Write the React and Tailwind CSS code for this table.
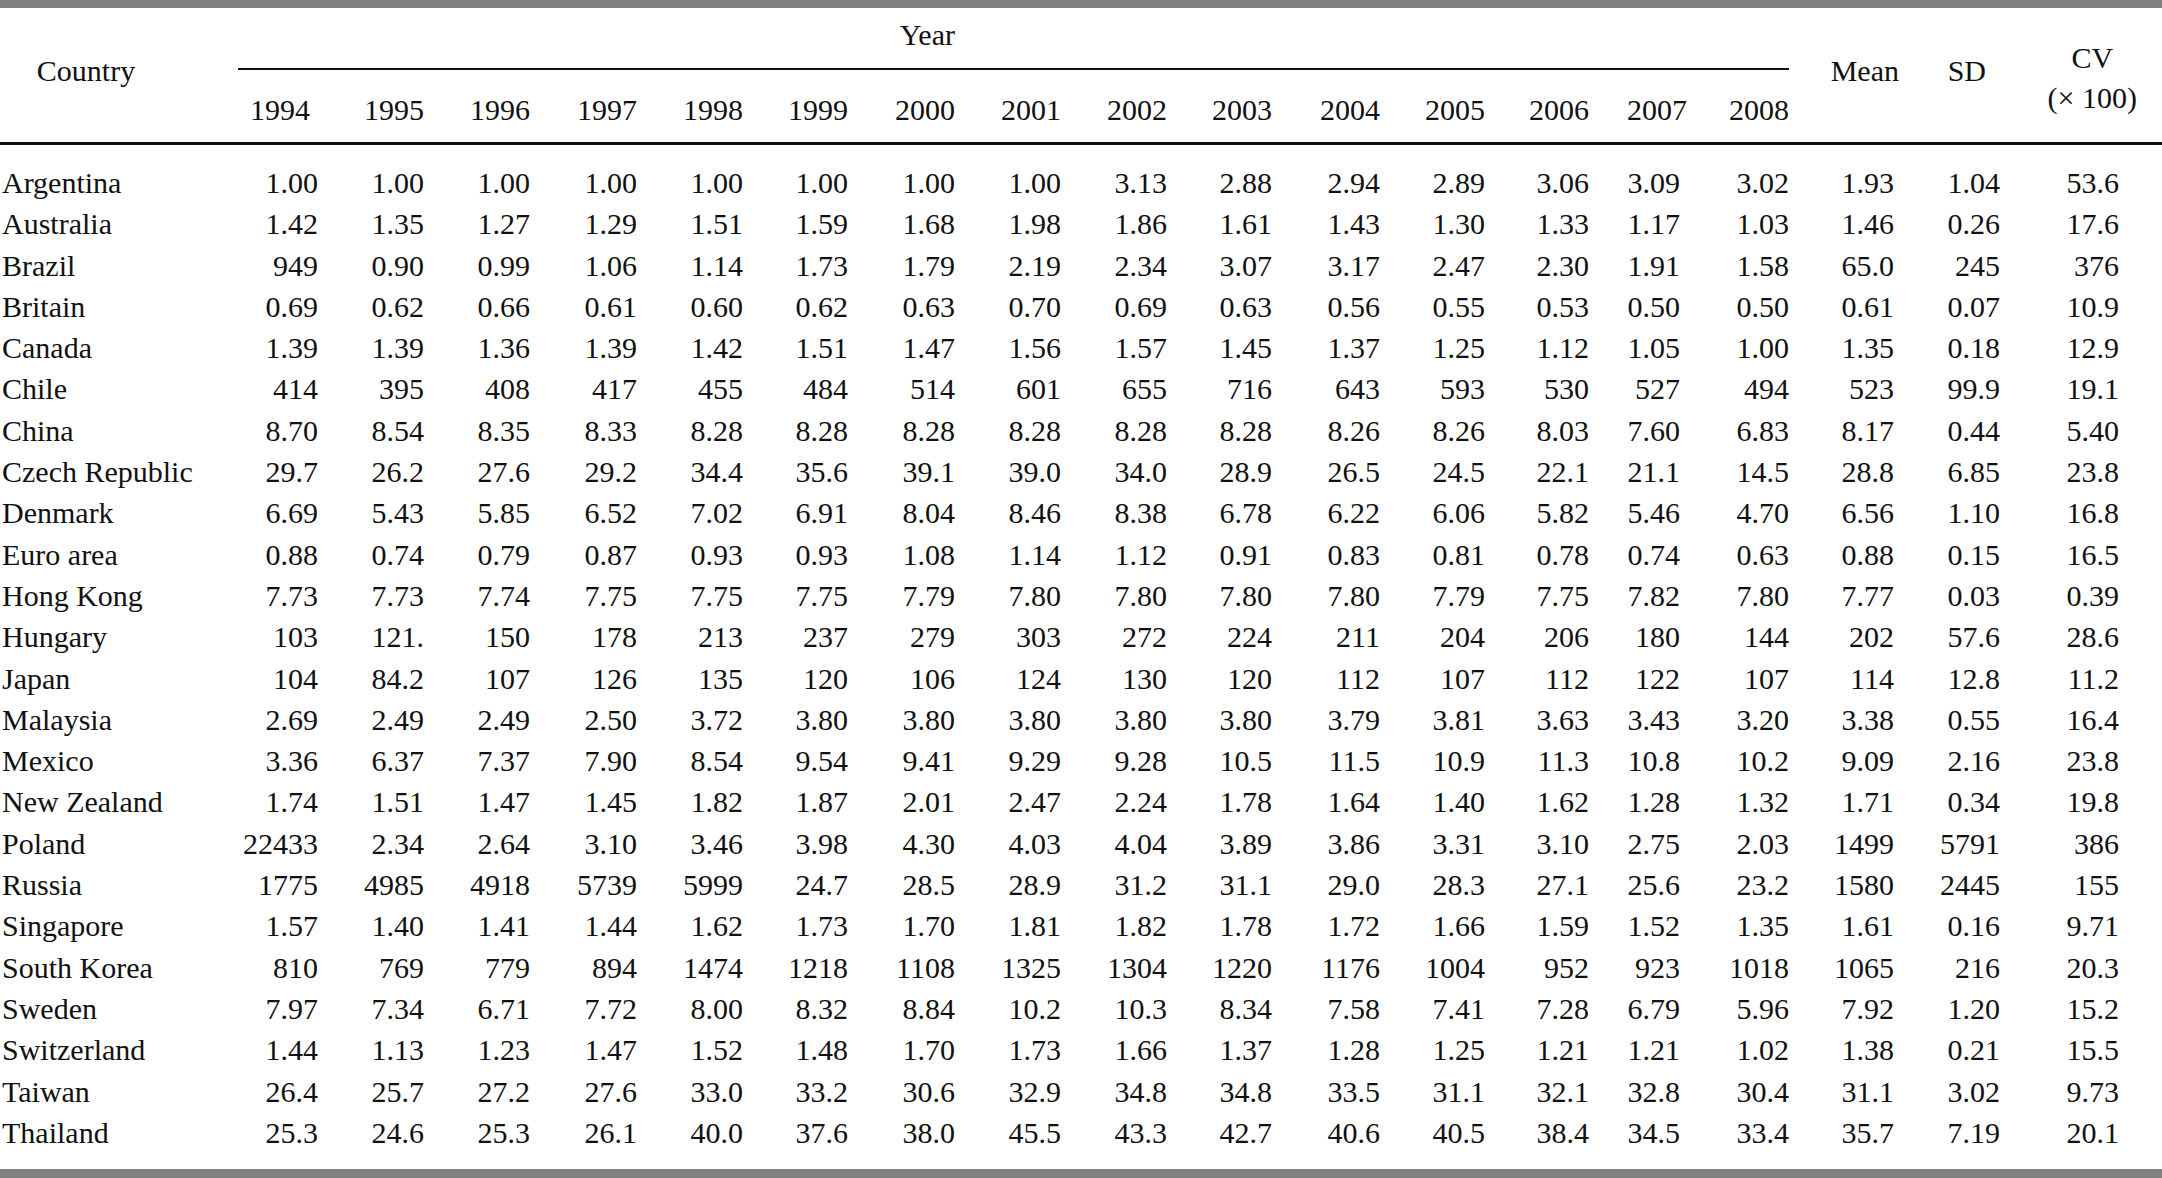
import React from "react";

const years = ["1994","1995","1996","1997","1998","1999","2000","2001","2002","2003","2004","2005","2006","2007","2008"];
const yearHeaderCls = [
  "mr-[8px]", "", "", "", "", "", "", "", "", "", "", "", "", "-mr-[7px]", "",
];

const rows = [
  ["Argentina", "1.00 1.00 1.00 1.00 1.00 1.00 1.00 1.00 3.13 2.88 2.94 2.89 3.06 3.09 3.02 1.93 1.04 53.6"],
  ["Australia", "1.42 1.35 1.27 1.29 1.51 1.59 1.68 1.98 1.86 1.61 1.43 1.30 1.33 1.17 1.03 1.46 0.26 17.6"],
  ["Brazil", "949 0.90 0.99 1.06 1.14 1.73 1.79 2.19 2.34 3.07 3.17 2.47 2.30 1.91 1.58 65.0 245 376"],
  ["Britain", "0.69 0.62 0.66 0.61 0.60 0.62 0.63 0.70 0.69 0.63 0.56 0.55 0.53 0.50 0.50 0.61 0.07 10.9"],
  ["Canada", "1.39 1.39 1.36 1.39 1.42 1.51 1.47 1.56 1.57 1.45 1.37 1.25 1.12 1.05 1.00 1.35 0.18 12.9"],
  ["Chile", "414 395 408 417 455 484 514 601 655 716 643 593 530 527 494 523 99.9 19.1"],
  ["China", "8.70 8.54 8.35 8.33 8.28 8.28 8.28 8.28 8.28 8.28 8.26 8.26 8.03 7.60 6.83 8.17 0.44 5.40"],
  ["Czech Republic", "29.7 26.2 27.6 29.2 34.4 35.6 39.1 39.0 34.0 28.9 26.5 24.5 22.1 21.1 14.5 28.8 6.85 23.8"],
  ["Denmark", "6.69 5.43 5.85 6.52 7.02 6.91 8.04 8.46 8.38 6.78 6.22 6.06 5.82 5.46 4.70 6.56 1.10 16.8"],
  ["Euro area", "0.88 0.74 0.79 0.87 0.93 0.93 1.08 1.14 1.12 0.91 0.83 0.81 0.78 0.74 0.63 0.88 0.15 16.5"],
  ["Hong Kong", "7.73 7.73 7.74 7.75 7.75 7.75 7.79 7.80 7.80 7.80 7.80 7.79 7.75 7.82 7.80 7.77 0.03 0.39"],
  ["Hungary", "103 121. 150 178 213 237 279 303 272 224 211 204 206 180 144 202 57.6 28.6"],
  ["Japan", "104 84.2 107 126 135 120 106 124 130 120 112 107 112 122 107 114 12.8 11.2"],
  ["Malaysia", "2.69 2.49 2.49 2.50 3.72 3.80 3.80 3.80 3.80 3.80 3.79 3.81 3.63 3.43 3.20 3.38 0.55 16.4"],
  ["Mexico", "3.36 6.37 7.37 7.90 8.54 9.54 9.41 9.29 9.28 10.5 11.5 10.9 11.3 10.8 10.2 9.09 2.16 23.8"],
  ["New Zealand", "1.74 1.51 1.47 1.45 1.82 1.87 2.01 2.47 2.24 1.78 1.64 1.40 1.62 1.28 1.32 1.71 0.34 19.8"],
  ["Poland", "22433 2.34 2.64 3.10 3.46 3.98 4.30 4.03 4.04 3.89 3.86 3.31 3.10 2.75 2.03 1499 5791 386"],
  ["Russia", "1775 4985 4918 5739 5999 24.7 28.5 28.9 31.2 31.1 29.0 28.3 27.1 25.6 23.2 1580 2445 155"],
  ["Singapore", "1.57 1.40 1.41 1.44 1.62 1.73 1.70 1.81 1.82 1.78 1.72 1.66 1.59 1.52 1.35 1.61 0.16 9.71"],
  ["South Korea", "810 769 779 894 1474 1218 1108 1325 1304 1220 1176 1004 952 923 1018 1065 216 20.3"],
  ["Sweden", "7.97 7.34 6.71 7.72 8.00 8.32 8.84 10.2 10.3 8.34 7.58 7.41 7.28 6.79 5.96 7.92 1.20 15.2"],
  ["Switzerland", "1.44 1.13 1.23 1.47 1.52 1.48 1.70 1.73 1.66 1.37 1.28 1.25 1.21 1.21 1.02 1.38 0.21 15.5"],
  ["Taiwan", "26.4 25.7 27.2 27.6 33.0 33.2 30.6 32.9 34.8 34.8 33.5 31.1 32.1 32.8 30.4 31.1 3.02 9.73"],
  ["Thailand", "25.3 24.6 25.3 26.1 40.0 37.6 38.0 45.5 43.3 42.7 40.6 40.5 38.4 34.5 33.4 35.7 7.19 20.1"],
];

const yearColCls = [
  "w-[80px]", "w-[106px]", "w-[106px]", "w-[107px]", "w-[106px]", "w-[105px]", "w-[107px]", "w-[106px]",
  "w-[106px]", "w-[105px]", "w-[108px]", "w-[105px]", "w-[104px]", "w-[91px]", "w-[109px]",
];
const statColCls = ["w-[105px]", "w-[106px]", "w-[119px]"];

export default function App() {
  return (
    <div className="w-[2162px] h-[1178px] flex flex-col bg-white text-[#111] font-['Liberation_Serif','Times_New_Roman',serif] text-[30px] overflow-hidden">
      <div className="h-[8px] bg-[#808080] shrink-0" />

      {/* Header */}
      <div className="h-[134px] flex shrink-0">
        <div className="w-[238px] shrink-0">
          <div className="w-[172px] text-center pt-[48px] leading-[30px]">Country</div>
        </div>
        <div className="w-[1551px] shrink-0 flex flex-col">
          <div className="pt-[12px] leading-[30px]">
            <div className="w-[717px] text-right">Year</div>
          </div>
          <div className="mt-[18px] h-[2px] bg-[#111]" />
          <div className="mt-[25px] flex leading-[30px]">
            {years.map((y, i) => (
              <div key={y} className={`${yearColCls[i]} shrink-0 flex justify-end`}>
                <span className={yearHeaderCls[i]}>{y}</span>
              </div>
            ))}
          </div>
        </div>
        <div className="w-[105px] shrink-0 flex justify-end pt-[48px] leading-[30px]">
          <span className="-mr-[5px]">Mean</span>
        </div>
        <div className="w-[106px] shrink-0 flex justify-end pt-[48px] leading-[30px]">
          <span className="mr-[14px]">SD</span>
        </div>
        <div className="w-[119px] shrink-0 flex justify-end pt-[30px] leading-[40px]">
          <div className="-mr-[18px] flex flex-col items-center whitespace-nowrap">
            <span>CV</span>
            <span>(× 100)</span>
          </div>
        </div>
      </div>

      <div className="h-[3px] bg-[#111] shrink-0" />

      {/* Body */}
      <div className="pt-[17px] flex flex-col">
        {rows.map(([name, vals]) => {
          const v = vals.split(" ");
          return (
            <div key={name} className="flex h-[41.3px] leading-[41.3px] whitespace-nowrap">
              <div className="w-[238px] shrink-0 pl-[2px]">{name}</div>
              {v.slice(0, 15).map((x, i) => (
                <div key={i} className={`${yearColCls[i]} shrink-0 text-right`}>{x}</div>
              ))}
              {v.slice(15).map((x, i) => (
                <div key={"s" + i} className={`${statColCls[i]} shrink-0 text-right`}>{x}</div>
              ))}
            </div>
          );
        })}
      </div>

      <div className="mt-auto h-[9px] bg-[#808080] shrink-0" />
    </div>
  );
}
